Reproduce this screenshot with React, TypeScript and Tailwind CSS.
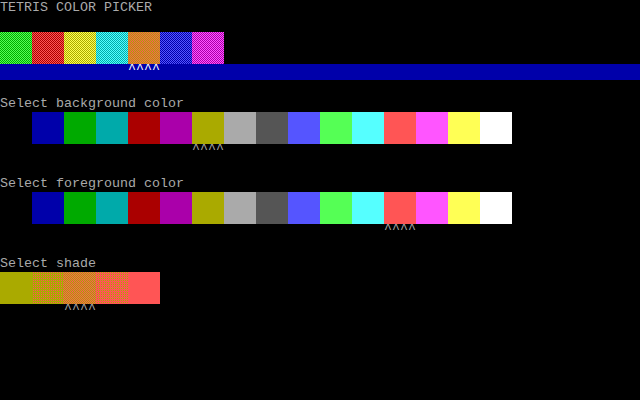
import React from "react";

const palette = [
  "#0000aa", "#00aa00", "#00aaaa", "#aa0000", "#aa00aa", "#aaaa00", "#aaaaaa",
  "#555555", "#5555ff", "#55ff55", "#55ffff", "#ff5555", "#ff55ff", "#ffff55", "#ffffff",
];

// dithered tetris piece colours: [dark, light]
const pieces: [string, string][] = [
  ["#00aa00", "#55ff55"],
  ["#aa0000", "#ff5555"],
  ["#aaaa00", "#ffff55"],
  ["#00aaaa", "#55ffff"],
  ["#aaaa00", "#ff5555"],
  ["#0000aa", "#5555ff"],
  ["#aa00aa", "#ff55ff"],
];

function dither(a: string, b: string, level: number) {
  // level: 0 = all a, 1 = 25% b, 2 = checker, 3 = 75% b, 4 = all b
  if (level === 0) return a;
  if (level === 4) return b;
  const img =
    level === 1
      ? `conic-gradient(${b} 0 25%, ${a} 0 100%)`
      : level === 2
      ? `conic-gradient(${b} 0 25%, ${a} 0 50%, ${b} 0 75%, ${a} 0 100%)`
      : `conic-gradient(${a} 0 25%, ${b} 0 100%)`;
  return `${img} 0 0 / 2px 2px`;
}

function Swatch({ bg }: { bg: string }) {
  return <div className="w-8 h-8" style={{ background: bg }} />;
}

function Carets({ offset, light }: { offset: string; light?: boolean }) {
  return (
    <div className={`h-4 leading-[12px] ${offset} ${light ? "text-[#ffffff]" : "text-[#aaaaaa]"}`}>^^^^</div>
  );
}

export default function App() {
  return (
    <div
      className="w-[640px] h-[400px] bg-black text-[#aaaaaa] text-[13.33px] leading-4 whitespace-pre overflow-hidden"
      style={{ fontFamily: '"Liberation Mono", "DejaVu Sans Mono", monospace' }}
    >
      <div className="h-4">TETRIS COLOR PICKER</div>
      <div className="h-4" />
      <div className="flex h-8">
        {pieces.map(([a, b], i) => (
          <Swatch key={i} bg={dither(a, b, 2)} />
        ))}
      </div>
      <div className="bg-[#0000aa]">
        <Carets offset="pl-[128px]" light />
      </div>
      <div className="h-4" />

      <div className="h-4">Select background color</div>
      <div className="flex h-8 pl-8">
        {palette.map((c) => (
          <Swatch key={c} bg={c} />
        ))}
      </div>
      <Carets offset="pl-[192px]" />
      <div className="h-4" />

      <div className="h-4">Select foreground color</div>
      <div className="flex h-8 pl-8">
        {palette.map((c) => (
          <Swatch key={c} bg={c} />
        ))}
      </div>
      <Carets offset="pl-[384px]" />
      <div className="h-4" />

      <div className="h-4">Select shade</div>
      <div className="flex h-8">
        {[0, 1, 2, 3, 4].map((l) => (
          <Swatch key={l} bg={dither("#aaaa00", "#ff5555", l)} />
        ))}
      </div>
      <Carets offset="pl-[64px]" />
    </div>
  );
}
